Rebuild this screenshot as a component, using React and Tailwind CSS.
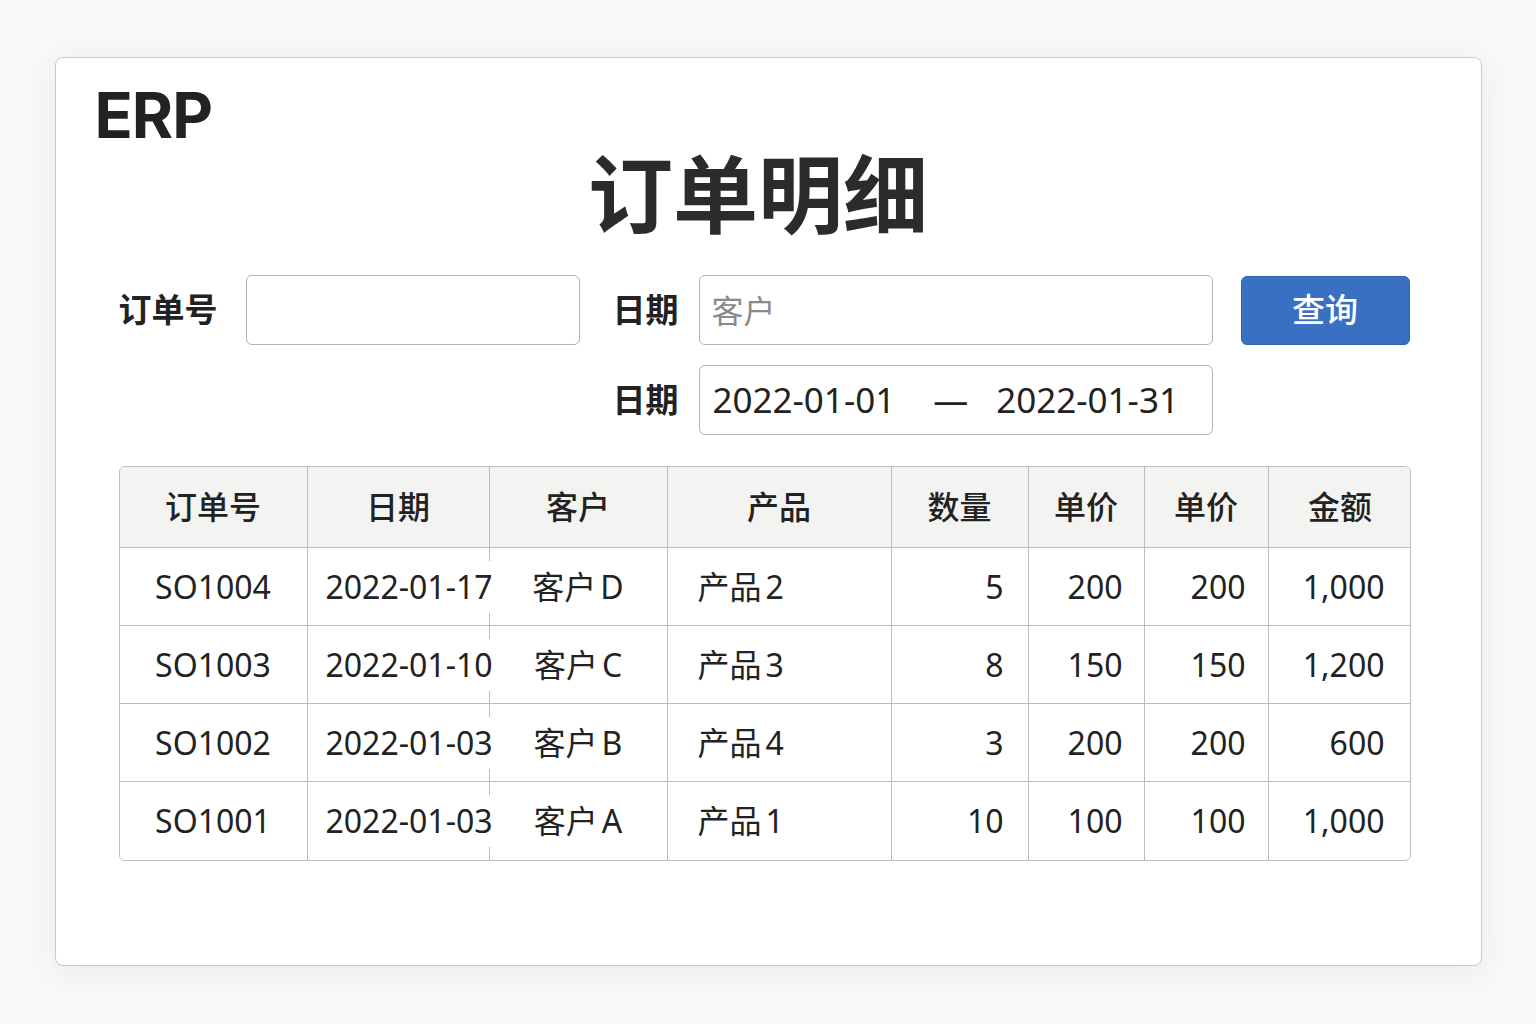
const ROWS = [
  { id: 'SO1004', date: '2022-01-17', customer: ['客户', 'D'], product: ['产品', '2'], qty: '5', price: '200', price2: '200', amount: '1,000' },
  { id: 'SO1003', date: '2022-01-10', customer: ['客户', 'C'], product: ['产品', '3'], qty: '8', price: '150', price2: '150', amount: '1,200' },
  { id: 'SO1002', date: '2022-01-03', customer: ['客户', 'B'], product: ['产品', '4'], qty: '3', price: '200', price2: '200', amount: '600' },
  { id: 'SO1001', date: '2022-01-03', customer: ['客户', 'A'], product: ['产品', '1'], qty: '10', price: '100', price2: '100', amount: '1,000' },
]

const HEADERS = ['订单号', '日期', '客户', '产品', '数量', '单价', '单价', '金额']
const WIDTHS = ['188px', '182px', '178px', '224px', '137px', '116px', '124px', '143px']

export default function App() {
  return (
    <div
      className="min-h-screen bg-[#f8f8f7] pt-[57px] text-[#222]"
      style={{ fontFamily: '"Noto Sans", "Noto Sans CJK SC", sans-serif' }}
    >
      <div className="mx-auto h-[909px] w-[1427px] rounded-[8px] border border-[#c9c9c9] bg-white shadow-[0_6px_30px_rgba(0,0,0,0.06)]">
        {/* header */}
        <div className="pl-[39px] pt-[20px]">
          <h2 className="text-[63px] font-bold leading-[74px] tracking-[-1px] text-[#222]" style={{ fontFamily: 'Inter, "Noto Sans", sans-serif' }}>
            ERP
          </h2>
        </div>
        <h1 className="-mt-[8px] pr-[20px] text-center text-[85px] font-bold leading-[100px] text-[#2b2b2b]">订单明细</h1>

        {/* search form */}
        <div className="ml-[63px] mt-[31px] flex flex-col gap-[20px]">
          <div className="flex items-center">
            <label className="w-[100px] shrink-0 whitespace-nowrap text-[33px] font-semibold">订单号</label>
            <input className="ml-[27px] h-[70px] w-[334px] rounded-[6px] border border-[#b3b3b3] bg-white px-[14px] text-[32px] outline-none" />
            <label className="ml-[33px] w-[66px] shrink-0 whitespace-nowrap text-[33px] font-semibold">日期</label>
            <input
              placeholder="客户"
              className="ml-[20px] h-[70px] w-[514px] rounded-[6px] border border-[#b3b3b3] bg-white px-[12px] text-[32px] outline-none placeholder:text-[#8a8a8a]"
            />
            <button
              type="button"
              className="ml-[28px] h-[69px] w-[169px] rounded-[6px] border border-[#2f62b3] bg-[#3a70c2] text-[33px] font-medium text-white"
            >
              查询
            </button>
          </div>
          <div className="flex items-center">
            <label className="ml-[494px] w-[66px] shrink-0 whitespace-nowrap text-[33px] font-semibold">日期</label>
            <div className="ml-[20px] flex h-[70px] w-[514px] items-center whitespace-nowrap rounded-[6px] border border-[#b3b3b3] bg-white pl-[13px] text-[35px]">
              <span>2022-01-01</span>
              <span className="ml-[38px]">—</span>
              <span className="ml-[28px]">2022-01-31</span>
            </div>
          </div>
        </div>

        {/* table */}
        <div className="ml-[63px] mt-[31px] w-[1292px] overflow-hidden rounded-[6px] border border-[#bdbdbd]">
          <table className="w-full table-fixed border-separate border-spacing-0 text-[32px]">
            <colgroup>
              {WIDTHS.map((w, i) => (
                <col key={i} style={{ width: w }} />
              ))}
            </colgroup>
            <thead>
              <tr className="h-[81px] bg-[#f3f3f2]">
                {HEADERS.map((h, i) => (
                  <th
                    key={i}
                    className={`border-b border-[#bdbdbd] text-center font-medium ${i < HEADERS.length - 1 ? 'border-r' : ''}`}
                  >
                    {h}
                  </th>
                ))}
              </tr>
            </thead>
            <tbody>
              {ROWS.map((r, idx) => {
                const last = idx === ROWS.length - 1
                const b = last ? '' : 'border-b'
                return (
                  <tr key={r.id} className="h-[78px] bg-white">
                    <td className={`${b} border-r border-[#bdbdbd] text-center`}>{r.id}</td>
                    <td className={`${b} border-r border-[#bdbdbd] overflow-visible whitespace-nowrap pl-[18px]`}>
                      <span className="relative z-10 inline-block bg-white leading-[52px]">{r.date}</span>
                    </td>
                    <td className={`${b} border-r border-[#bdbdbd] text-center`}>
                      {r.customer[0]}
                      <span className="ml-[4px]">{r.customer[1]}</span>
                    </td>
                    <td className={`${b} border-r border-[#bdbdbd] pl-[30px]`}>
                      {r.product[0]}
                      <span className="ml-[4px]">{r.product[1]}</span>
                    </td>
                    <td className={`${b} border-r border-[#bdbdbd] pr-[24px] text-right`}>{r.qty}</td>
                    <td className={`${b} border-r border-[#bdbdbd] pr-[21px] text-right`}>{r.price}</td>
                    <td className={`${b} border-r border-[#bdbdbd] pr-[22px] text-right`}>{r.price2}</td>
                    <td className={`${b} border-[#bdbdbd] pr-[27px] text-right`}>{r.amount}</td>
                  </tr>
                )
              })}
            </tbody>
          </table>
        </div>
      </div>
    </div>
  )
}
